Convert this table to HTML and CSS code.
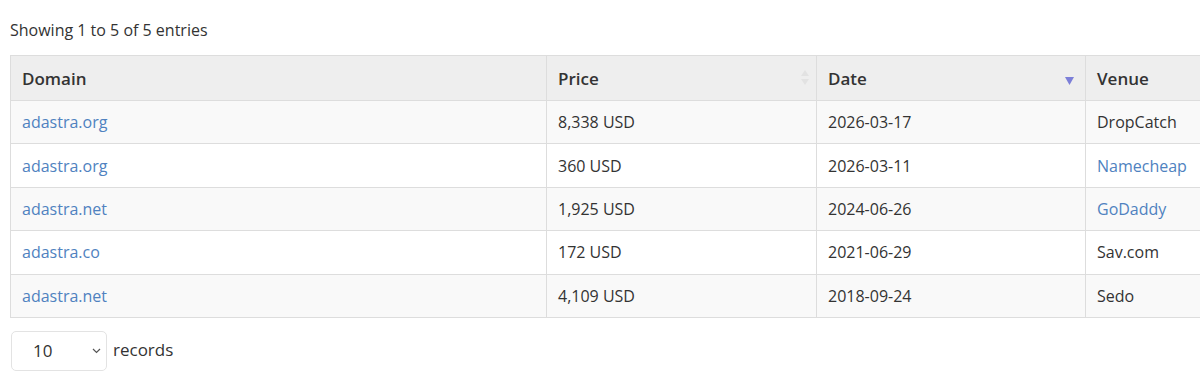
FILE: index.html
```html
<!DOCTYPE html>
<html>
<head>
<meta charset="utf-8">
<link rel="stylesheet" href="styles.css">
</head>
<body>
<div class="wrap">
  <div class="info">Showing 1 to 5 of 5 entries</div>
  <table class="grid">
    <colgroup>
      <col class="c-domain"><col class="c-price"><col class="c-date"><col class="c-venue">
    </colgroup>
    <thead>
      <tr>
        <th>Domain</th>
        <th class="sortable">Price<span class="sort-both"><svg width="8" height="15" viewBox="0 0 8 15"><path d="M4 0 L8 6 L0 6 Z" fill="#e2e2e2"/><path d="M0 9 L8 9 L4 15 Z" fill="#e2e2e2"/></svg></span></th>
        <th class="sortable">Date<span class="sort-desc"><svg width="9" height="8" viewBox="0 0 9 8"><path d="M0 0 L9 0 L4.5 8 Z" fill="#7c7fd8"/></svg></span></th>
        <th>Venue</th>
      </tr>
    </thead>
    <tbody>
      <tr><td><a href="#">adastra.org</a></td><td>8,338 USD</td><td>2026-03-17</td><td>DropCatch</td></tr>
      <tr><td><a href="#">adastra.org</a></td><td>360 USD</td><td>2026-03-11</td><td><a href="#">Namecheap</a></td></tr>
      <tr><td><a href="#">adastra.net</a></td><td>1,925 USD</td><td>2024-06-26</td><td><a href="#">GoDaddy</a></td></tr>
      <tr><td><a href="#">adastra.co</a></td><td>172 USD</td><td>2021-06-29</td><td>Sav.com</td></tr>
      <tr><td><a href="#">adastra.net</a></td><td>4,109 USD</td><td>2018-09-24</td><td>Sedo</td></tr>
    </tbody>
  </table>
  <div class="length">
    <div class="select"><span class="val">10</span><svg class="chev" width="9" height="6" viewBox="0 0 9 6"><path d="M1 1 L4.5 4.5 L8 1" fill="none" stroke="#555" stroke-width="1.2"/></svg></div>
    <span class="records">records</span>
  </div>
</div>
</body>
</html>
```

FILE: styles.css
```css
html, body {
  margin: 0;
  padding: 0;
  background: #fff;
  overflow: hidden;
}
body {
  font-family: "Open Sans", "Noto Sans", sans-serif;
  color: #333;
  font-size: 16px;
}
.wrap {
  padding: 20px 0 0 10px;
  width: 1250px;
}
.info {
  font-size: 16px;
  line-height: 20px;
  height: 20px;
  margin-bottom: 15px;
}
.grid {
  border-collapse: collapse;
  width: 1240px;
  table-layout: fixed;
  border: 1px solid #dddddd;
}
.c-domain { width: 536px; }
.c-price { width: 270px; }
.c-date { width: 269px; }
.c-venue { width: 165px; }
.grid th {
  background: #eeeeee;
  text-align: left;
  font-weight: 600;
  font-size: 17px;
  height: 45px;
  padding: 0 11px;
  border: 1px solid #dddddd;
  position: relative;
  box-sizing: border-box;
}
.grid td {
  height: 43.4px;
  padding: 0 11px;
  border: 1px solid #dddddd;
  box-sizing: border-box;
  font-size: 16px;
}
.grid tbody tr:nth-child(odd) td { background: #f9f9f9; }
.grid tbody tr:nth-child(even) td { background: #ffffff; }
.grid a {
  color: #4f82c0;
  text-decoration: none;
}
.sort-both {
  position: absolute;
  right: 7px;
  top: 14px;
  line-height: 0;
}
.sort-desc {
  position: absolute;
  right: 11px;
  top: 21px;
  line-height: 0;
}
.length {
  display: flex;
  align-items: center;
  margin-top: 13px;
  margin-left: 1px;
  gap: 6px;
}
.select {
  width: 96px;
  height: 40px;
  box-sizing: border-box;
  border: 1px solid #e3e3e3;
  border-radius: 5px;
  display: flex;
  align-items: center;
  justify-content: space-between;
  padding: 0 5px 0 21px;
  font-size: 17px;
}
.chev { margin-top: 1px; }
.records {
  font-size: 17px;
  margin-top: -3px;
}
```
